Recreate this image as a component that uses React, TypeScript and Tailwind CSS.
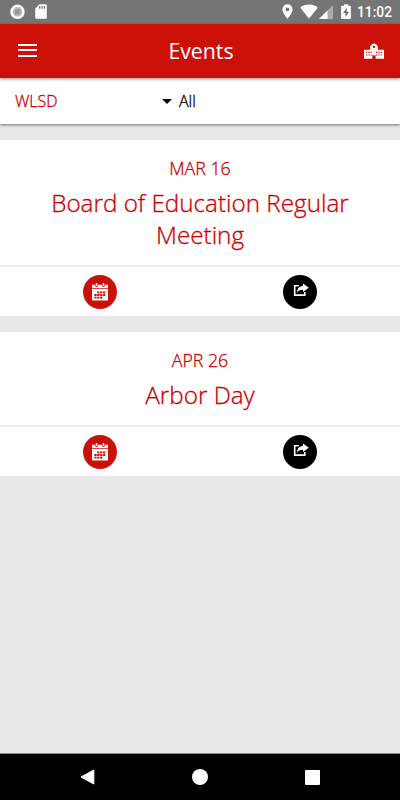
import React from "react";

const OPEN = "font-['Open_Sans','Noto_Sans',sans-serif]";

function StatusBar() {
  return (
    <div className="flex h-[23.5px] shrink-0 items-start bg-[#757575] pl-2.5 pr-2 text-white">
      <svg className="mt-1 h-4 w-[15px]" viewBox="0 0 15 16">
        <circle cx="7.5" cy="7.8" r="7.2" fill="#fff" />
        <circle cx="7.5" cy="7.8" r="4.8" fill="#bdbdbd" />
        <circle cx="7.5" cy="7.8" r="3" fill="#9a9a9a" />
      </svg>
      <svg className="ml-[10px] mt-1 h-[15px] w-3" viewBox="0 0 12 15">
        <path d="M4.5.3H10.6Q11.8.3 11.8 1.5V13.7Q11.8 14.8 10.6 14.8H1.4Q.2 14.8.2 13.7V4.6Z" fill="#fff" />
        <path d="M4.7 2v2.7M7.1 2v2.7M9.4 2v2.7" stroke="#757575" strokeWidth="1.2" />
      </svg>
      <svg className="ml-auto mt-1 h-[15px] w-[11px]" viewBox="0 0 11 15">
        <path fillRule="evenodd" d="M5.5.3A5.1 5.1 0 0 0 .4 5.4C.4 9 5.5 14.7 5.5 14.7S10.6 9 10.6 5.4A5.1 5.1 0 0 0 5.5.3ZM5.5 3.5a1.9 1.9 0 1 1 0 3.8 1.9 1.9 0 0 1 0-3.8Z" fill="#fff" />
      </svg>
      <svg className="ml-[7px] mt-1 h-[15px] w-[18px]" viewBox="0 0 18 15">
        <path d="M9 14.6.2 3.7C2.7 1.6 5.6.5 9 .5s6.3 1.1 8.8 3.2Z" fill="#fff" />
      </svg>
      <svg className="ml-[1px] mt-[5px] h-[14px] w-[14px]" viewBox="0 0 14 14">
        <path d="M14 0v14H0Z" fill="#aaa" />
        <path d="M8.5 5.5V14H0Z" fill="#fff" />
      </svg>
      <svg className="ml-2 mt-1 h-[15px] w-[10px]" viewBox="0 0 10 15">
        <path d="M3 .2h4v1.5h2.2q.7 0 .7.8v11.6q0 .8-.7.8H.8q-.7 0-.7-.8V2.5q0-.8.7-.8H3Z" fill="#fff" />
        <path d="M6 3.8 2.1 8.9h2.4v4.2L8 7.8H5.6Z" fill="#666" />
      </svg>
      <span className="ml-[6px] w-[35px] whitespace-nowrap font-[Roboto,sans-serif] text-[13.8px] font-medium leading-[25px]">11:02</span>
    </div>
  );
}

function SchoolIcon() {
  return (
    <svg className="h-4 w-5" viewBox="0 0 20 16">
      <path d="M0 6.8h6.2V3.6Q6.4 2.3 8 1.2 10 0 12 1.2q1.6 1.1 1.8 2.4v3.2H20v8.9h-8.4v-3.4H8.4v3.4H0Z" fill="#fff" />
      <circle cx="10" cy="4" r="1.15" fill="#cc1008" />
      <path d="M2 9.4h6M2 12h6M12 9.4h6M12 12h6" stroke="#cc1008" strokeWidth="1.2" strokeDasharray="1.3 1" />
    </svg>
  );
}

function CalendarIcon() {
  return (
    <svg className="h-[18px] w-[18px]" viewBox="0 0 18 18">
      <path d="M1 1.8h3.2v1q0 1.2 1.3 1.2t1.3-1.2v-1h4.4v1q0 1.2 1.3 1.2t1.3-1.2v-1H17V5.2H1Z" fill="#fff" />
      <path d="M5.5 0v2.9M12.5 0v2.9" stroke="#fff" strokeWidth="1.4" />
      <path d="M1 6h16v10.6q0 1-1 1H2q-1 0-1-1Z" fill="#fff" />
      <path d="M6.2 9.4h8.6M3.3 12h11.5M3.3 14.6h8.6" stroke="#cc1008" strokeWidth="1.9" strokeDasharray="2.3 .6" />
    </svg>
  );
}

function ShareIcon() {
  return (
    <svg className="h-[14px] w-[16px]" viewBox="0 0 16 14">
      <path d="M5.8 2.8H1.7v9.3h10.1V9" fill="none" stroke="#fff" strokeWidth="1.6" />
      <path d="M10 .4 15.8 4.7 10 9.1V6.8C7.2 6.6 5.4 7.3 3.8 9.7 4.1 5.6 6.6 3.2 10 2.8Z" fill="#fff" />
    </svg>
  );
}

function EventCard({ date, title }: { date: string; title: string }) {
  return (
    <article className="bg-white text-center text-[#cc0000]">
      <div className="border-b-2 border-[#eeeeee] px-8 pb-[14px] pt-4 font-light [-webkit-text-stroke:0.3px]">
        <p className="text-[17.8px] leading-6">{date}</p>
        <h2 className="mt-[7px] text-[24.25px] leading-8">{title}</h2>
      </div>
      <div className="grid h-[49px] grid-cols-2 place-items-center">
        <button aria-label="Add to calendar" className="flex size-[34px] items-center justify-center rounded-full bg-[#cc1008]">
          <CalendarIcon />
        </button>
        <button aria-label="Share" className="flex size-[34px] items-center justify-center rounded-full bg-black pb-1 pl-px">
          <ShareIcon />
        </button>
      </div>
    </article>
  );
}

export default function App() {
  return (
    <div className={`flex h-[800px] w-[400px] flex-col overflow-hidden bg-[#e9e9e9] ${OPEN}`}>
      <StatusBar />
      <header className="z-20 grid h-[54px] shrink-0 grid-cols-[1fr_auto_1fr] items-center bg-[#cc1008] pl-[18px] pr-4 text-white shadow-[0_1px_3px_rgba(0,0,0,0.45)]">
        <button aria-label="Menu" className="flex w-[19px] flex-col gap-[3.5px] pb-px">
          <span className="h-[2px] bg-white" />
          <span className="h-[2px] bg-white" />
          <span className="h-[2px] bg-white" />
        </button>
        <h1 className="text-[21.3px] leading-7">Events</h1>
        <div className="justify-self-end"><SchoolIcon /></div>
      </header>
      <div className="z-10 flex h-[46.5px] shrink-0 items-center bg-white px-[15px] text-[16px] font-light leading-6 shadow-[0_1px_3px_rgba(0,0,0,0.5)] [-webkit-text-stroke:0.3px]">
        <span className="w-[147px] pt-px text-[#cc0000]">WLSD</span>
        <svg className="mt-px h-[5px] w-[10px]" viewBox="0 0 10 5"><path d="M0 0h10L5 5Z" fill="#000" /></svg>
        <span className="ml-[7px] pt-px text-black">All</span>
      </div>
      <main className="flex grow flex-col gap-4 pt-4">
        <EventCard date="MAR 16" title="Board of Education Regular Meeting" />
        <EventCard date="APR 26" title="Arbor Day" />
      </main>
      <nav className="grid h-[47px] shrink-0 grid-cols-[1fr_49px_1fr] items-center border-t border-[#888] bg-black">
        <svg className="ml-[80px] h-4 w-[15px]" viewBox="0 0 15 16"><path d="M13.8 1 1 8l12.8 7Z" fill="#fff" stroke="#fff" strokeWidth="1" strokeLinejoin="round" /></svg>
        <span className="size-4 justify-self-center rounded-full bg-white" />
        <span className="mr-[80px] size-[15px] justify-self-end rounded-[1px] bg-white" />
      </nav>
    </div>
  );
}
